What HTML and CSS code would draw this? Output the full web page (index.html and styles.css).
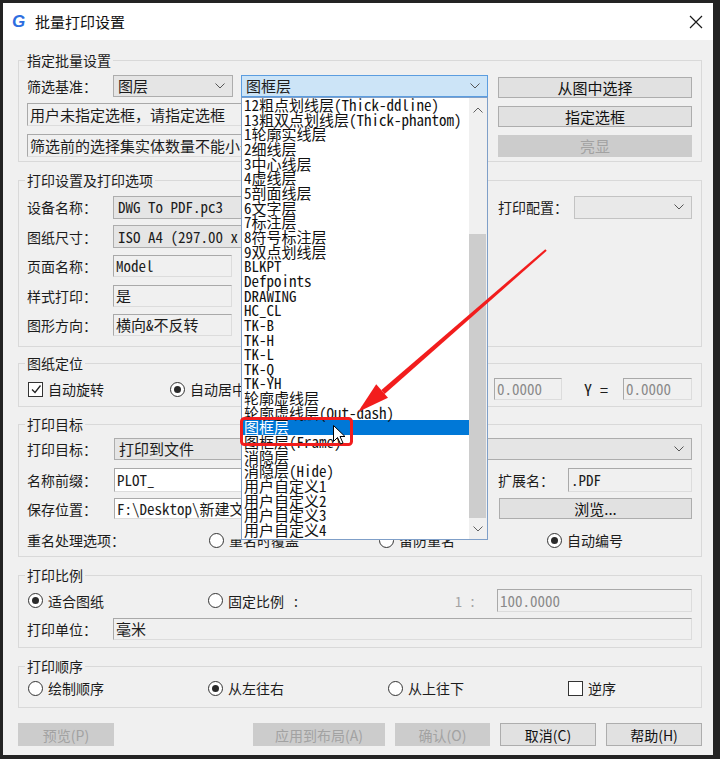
FILE: index.html
```html
<!DOCTYPE html>
<html lang="zh-CN">
<head>
<meta charset="utf-8">
<title>批量打印设置</title>
<link rel="stylesheet" href="styles.css">
</head>
<body>
<div class="win">
  <header class="titlebar">
    <span class="logo">G</span>
    <span class="title">批量打印设置</span>
    <svg class="close" width="14" height="14" viewBox="0 0 14 14"><path d="M1 1L13 13M13 1L1 13" stroke="#1a1a1a" stroke-width="1.2"/></svg>
  </header>
  <main class="content">
    <fieldset class="grp g1">
      <legend>指定批量设置</legend>
      <div class="g1-body">
        <div class="g1-left">
          <div class="row h22">
            <span class="lbl w86">筛选基准：</span>
            <div class="combo w120 mr8"><span>图层</span><svg class="chev" width="10" height="6" viewBox="0 0 10 6"><path d="M0.5 0.5L5 5L9.5 0.5" fill="none" stroke="#555"/></svg></div>
            <div class="combo-wrap">
              <div class="combo focus"><span>图框层</span><svg class="chev" width="10" height="6" viewBox="0 0 10 6"><path d="M0.5 0.5L5 5L9.5 0.5" fill="none" stroke="#555"/></svg></div>
              <div class="dropdown">
                <div class="dd-list">
                  <div class="dd-item">12粗点划线层(Thick-ddline)</div>
                  <div class="dd-item">13粗双点划线层(Thick-phantom)</div>
                  <div class="dd-item">1轮廓实线层</div>
                  <div class="dd-item">2细线层</div>
                  <div class="dd-item">3中心线层</div>
                  <div class="dd-item">4虚线层</div>
                  <div class="dd-item">5剖面线层</div>
                  <div class="dd-item">6文字层</div>
                  <div class="dd-item">7标注层</div>
                  <div class="dd-item">8符号标注层</div>
                  <div class="dd-item">9双点划线层</div>
                  <div class="dd-item">BLKPT</div>
                  <div class="dd-item">Defpoints</div>
                  <div class="dd-item">DRAWING</div>
                  <div class="dd-item">HC_CL</div>
                  <div class="dd-item">TK-B</div>
                  <div class="dd-item">TK-H</div>
                  <div class="dd-item">TK-L</div>
                  <div class="dd-item">TK-Q</div>
                  <div class="dd-item">TK-YH</div>
                  <div class="dd-item">轮廓虚线层</div>
                  <div class="dd-item">轮廓虚线层(Out-dash)</div>
                  <div class="dd-item sel">图框层</div>
                  <div class="dd-item">图框层(Frame)</div>
                  <div class="dd-item">消隐层</div>
                  <div class="dd-item">消隐层(Hide)</div>
                  <div class="dd-item">用户自定义1</div>
                  <div class="dd-item">用户自定义2</div>
                  <div class="dd-item">用户自定义3</div>
                  <div class="dd-item">用户自定义4</div>
                </div>
                <div class="dd-scroll">
                  <div class="dd-up"><svg width="10" height="6" viewBox="0 0 10 6"><path d="M0.5 5.5L5 1L9.5 5.5" fill="none" stroke="#606060"/></svg></div>
                  <div class="dd-track"></div>
                  <div class="dd-thumb"></div>
                  <div class="dd-down"><svg width="10" height="6" viewBox="0 0 10 6"><path d="M0.5 0.5L5 5L9.5 0.5" fill="none" stroke="#606060"/></svg></div>
                </div>
              </div>
            </div>
          </div>
          <div class="edit note mt6">用户未指定选框，请指定选框</div>
          <div class="edit note mt8">筛选前的选择集实体数量不能小于1</div>
        </div>
        <div class="g1-right">
          <button class="btn h21">从图中选择</button>
          <button class="btn h21">指定选框</button>
          <button class="btn h22 dis">亮显</button>
        </div>
      </div>
    </fieldset>

    <fieldset class="grp g2">
      <legend>打印设置及打印选项</legend>
      <div class="rows g2-rows">
        <div class="row h24">
          <span class="lbl w86">设备名称：</span>
          <div class="combo w375 mono"><span>DWG To PDF.pc3</span><svg class="chev" width="10" height="6" viewBox="0 0 10 6"><path d="M0.5 0.5L5 5L9.5 0.5" fill="none" stroke="#555"/></svg></div>
          <span class="lbl w76 ml10">打印配置：</span>
          <div class="combo w118 light"><span></span><svg class="chev" width="10" height="6" viewBox="0 0 10 6"><path d="M0.5 0.5L5 5L9.5 0.5" fill="none" stroke="#555"/></svg></div>
        </div>
        <div class="row h24">
          <span class="lbl w86">图纸尺寸：</span>
          <div class="combo w375 mono"><span>ISO A4 (297.00 x 210.00 毫米)</span><svg class="chev" width="10" height="6" viewBox="0 0 10 6"><path d="M0.5 0.5L5 5L9.5 0.5" fill="none" stroke="#555"/></svg></div>
        </div>
        <div class="row h24">
          <span class="lbl w86">页面名称：</span>
          <div class="edit w119 h22 mono">Model</div>
        </div>
        <div class="row h24">
          <span class="lbl w86">样式打印：</span>
          <div class="edit w119 h22 mono">是</div>
        </div>
        <div class="row h24">
          <span class="lbl w86">图形方向：</span>
          <div class="edit w119 h22 mono">横向&amp;不反转</div>
        </div>
      </div>
    </fieldset>

    <fieldset class="grp g3">
      <legend>图纸定位</legend>
      <div class="row h22">
        <label class="opt w142"><span class="check"><svg width="12" height="12" viewBox="0 0 12 12"><path d="M2 6.5L5 9.5L10.5 2.5" fill="none" stroke="#222" stroke-width="1.3"/></svg></span>自动旋转</label>
        <label class="opt w286"><span class="radio on"></span>自动居中</label>
        <span class="lbl w39 mono">X =</span>
        <div class="edit w68 h22 mono dim">0.0000</div>
        <span class="lbl w61 mono ylbl">Y =</span>
        <div class="edit w69 h22 mono dim">0.0000</div>
      </div>
    </fieldset>

    <fieldset class="grp g4">
      <legend>打印目标</legend>
      <div class="rows">
        <div class="row h22">
          <span class="lbl w87">打印目标：</span>
          <div class="combo w578"><span>打印到文件</span><svg class="chev" width="10" height="6" viewBox="0 0 10 6"><path d="M0.5 0.5L5 5L9.5 0.5" fill="none" stroke="#555"/></svg></div>
        </div>
        <div class="row h24 mt8">
          <span class="lbl w87">名称前缀：</span>
          <div class="edit white w374 h24 mono">PLOT_</div>
          <span class="lbl w70 ml10">扩展名：</span>
          <div class="edit w124 h24 mono">.PDF</div>
        </div>
        <div class="row h21 mt6">
          <span class="lbl w87">保存位置：</span>
          <div class="edit white w374 h21 mono">F:\Desktop\新建文件夹\</div>
          <button class="btn w193 h21 ml11">浏览...</button>
        </div>
        <div class="row h20 mt11">
          <span class="lbl w181">重名处理选项：</span>
          <label class="opt w170"><span class="radio"></span><span class="half">重名时覆盖</span></label>
          <label class="opt w168"><span class="radio"></span>留防重名</label>
          <label class="opt"><span class="radio on"></span>自动编号</label>
        </div>
      </div>
    </fieldset>

    <fieldset class="grp g5">
      <legend>打印比例</legend>
      <div class="rows">
        <div class="row h23">
          <label class="opt w180"><span class="radio on"></span>适合图纸</label>
          <label class="opt w248"><span class="radio"></span>固定比例<span class="colon">:</span></label>
          <span class="lbl w42 mono dimtxt">1 :</span>
          <div class="edit w195 h23 mono dim">100.0000</div>
        </div>
        <div class="row h22 mt6">
          <span class="lbl w86">打印单位：</span>
          <div class="edit w579 h22">毫米</div>
        </div>
      </div>
    </fieldset>

    <fieldset class="grp g6">
      <legend>打印顺序</legend>
      <div class="row h18">
        <label class="opt w180"><span class="radio"></span>绘制顺序</label>
        <label class="opt w180"><span class="radio on"></span>从左往右</label>
        <label class="opt w180"><span class="radio"></span>从上往下</label>
        <label class="opt"><span class="check"></span>逆序</label>
      </div>
    </fieldset>

    <div class="btnbar">
      <button class="btn dis w96 h23">预览(P)</button>
      <button class="btn dis w132 h23 mla">应用到布局(A)</button>
      <button class="btn dis w95 h23">确认(O)</button>
      <button class="btn w96 h23">取消(C)</button>
      <button class="btn w96 h23">帮助(H)</button>
    </div>
  </main>
</div>

<svg class="overlay" width="720" height="759" viewBox="0 0 720 759">
  <rect x="241.5" y="418.5" width="110" height="26" rx="3" fill="none" stroke="#f21d1d" stroke-width="3"/>
  <polygon points="546.7,250.8 545.3,249.2 381.4,390.1 384.6,393.9" fill="#f21d1d"/>
  <polygon points="358,412 376.2,384.2 388,397.8" fill="#f21d1d"/>
  <path transform="translate(333 425)" d="M0.5 0.5V16.5L4.5 12.5L7.5 19L10 18L7 11.5H12Z" fill="#fff" stroke="#000" stroke-width="1"/>
</svg>
</body>
</html>
```

FILE: styles.css
```css
* { box-sizing: border-box; }
html, body { margin: 0; padding: 0; }
body {
  position: relative;
  width: 720px;
  height: 759px;
  overflow: hidden;
  background: #232323;
  font-family: "Noto Sans CJK SC", "Noto Sans", sans-serif;
  font-size: 14px;
  line-height: 20px;
  color: #1c1c1c;
}
.mono { font-family: "Noto Sans Mono CJK SC", "Liberation Mono", "Noto Sans CJK SC", monospace; }

.win {
  margin: 3px 0 0 3px;
  width: 710px;
  height: 752px;
  background: #f0f0f0;
  display: flex;
  flex-direction: column;
}
.titlebar {
  flex: none;
  height: 37px;
  background: #fff;
  display: flex;
  align-items: center;
  padding: 0 10px 0 9px;
}
.logo {
  width: 14px;
  font: italic 900 17px/1 "Liberation Sans", sans-serif;
  color: #2d6ee0;
}
.title { margin-left: 9px; font-size: 15px; color: #111; }
.close { margin-left: auto; }

.content {
  display: flex;
  flex-direction: column;
  padding: 10px 11px 0 15px;
}
.grp {
  margin: 0;
  min-width: 0;
  border: 1px solid #d9d9d9;
  padding: 0 9px 0 8px;
}
.grp legend {
  padding: 0 2px;
  margin-left: -2px;
  font-size: 14px;
  line-height: 20px;
}
.g1 { padding-top: 5px; padding-bottom: 4px; }
.g2 { margin-top: 8px; padding-top: 5px; padding-bottom: 9px; }
.g3 { margin-top: 6px; padding-top: 5px; padding-bottom: 6px; }
.g4 { margin-top: 7px; padding-top: 4px; padding-bottom: 6px; }
.g5 { margin-top: 8px; padding-top: 4px; padding-bottom: 7px; }
.g6 { margin-top: 8px; padding-top: 3px; padding-bottom: 10px; }

.row { display: flex; align-items: center; }
.rows { display: flex; flex-direction: column; }
.g2-rows { gap: 5.5px; }

/* buttons (before utility classes so margins below win) */
.btn {
  flex: none;
  appearance: none;
  padding: 0;
  font-family: inherit;
  font-size: 15px;
  line-height: 18px;
  color: #111;
  background: #e1e1e1;
  border: 1px solid #adadad;
}
.g1-right .btn { width: 194px; }
.btn.dis { background: #cccccc; border-color: #cccccc; color: #a2a2a2; }
.btnbar { margin-top: 15px; display: flex; gap: 10px; }
.btnbar .btn { font-size: 14px; }

.h18 { height: 18px; } .h20 { height: 20px; } .h21 { height: 21px; }
.h22 { height: 22px; } .h23 { height: 23px; } .h24 { height: 24px; }
.mt6 { margin-top: 6px; } .mt8 { margin-top: 8px; } .mt11 { margin-top: 11px; }
.ml10 { margin-left: 10px; } .ml11 { margin-left: 11px; } .mr8 { margin-right: 8px; }
.mla { margin-left: auto; }
.w39 { width: 39px; } .w42 { width: 42px; } .w61 { width: 61px; } .w68 { width: 68px; }
.w69 { width: 69px; } .w70 { width: 70px; } .w76 { width: 76px; } .w86 { width: 86px; }
.w87 { width: 87px; } .w95 { width: 95px; } .w96 { width: 96px; } .w118 { width: 118px; }
.w119 { width: 119px; } .w120 { width: 120px; } .w124 { width: 124px; } .w132 { width: 132px; }
.w142 { width: 142px; } .w168 { width: 168px; } .w170 { width: 170px; } .w180 { width: 180px; }
.w181 { width: 181px; } .w193 { width: 193px; } .w195 { width: 195px; } .w248 { width: 248px; }
.w286 { width: 286px; } .w374 { width: 374px; } .w375 { width: 375px; } .w578 { width: 578px; }
.w579 { width: 579px; }

.lbl { flex: none; white-space: nowrap; }

/* group 1 */
.g1-body { display: flex; gap: 10px; }
.g1-left { width: 461px; display: flex; flex-direction: column; }
.g1-right { width: 194px; padding-top: 2px; display: flex; flex-direction: column; gap: 8px; }

/* combo boxes */
.combo {
  flex: none;
  height: 22px;
  display: flex;
  align-items: center;
  background: #e5e5e5;
  border: 1px solid #adadad;
  padding: 0 7px 0 4px;
  white-space: nowrap;
  overflow: hidden;
  font-size: 15px;
}
.row.h24 > .combo { height: 23px; }
.combo > span { flex: 1; overflow: hidden; }
.combo .chev { flex: none; margin-left: 6px; }
.combo.light { background: #e9e9e9; border-color: #c3c3c3; }
.combo.focus { width: 247px; background: #cce4f7; border-color: #5b9de0; }
.combo-wrap { position: relative; width: 247px; flex: none; }

/* dropdown popup */
.dropdown {
  position: absolute;
  top: 100%;
  left: 0;
  z-index: 20;
  width: 247px;
  height: 443px;
  background: #fff;
  border: 1px solid #7f9fc8;
  display: flex;
}
.dd-list {
  width: 227px;
  font-family: "Noto Sans Mono CJK SC", "Liberation Mono", "Noto Sans CJK SC", monospace;
  font-size: 15px;
  line-height: 14.66px;
  color: #111;
}
.dd-item { height: 14.66px; padding-left: 2px; white-space: nowrap; }
.dd-item.sel { background: #0078d7; color: #fff; margin-left: 1px; padding-left: 1px; }
.dd-scroll { width: 18px; background: #f0f0f0; display: flex; flex-direction: column; }
.dd-up { height: 22px; display: flex; align-items: center; justify-content: center; padding-top: 2px; }
.dd-track { height: 114px; }
.dd-thumb { height: 284px; background: #cdcdcd; margin-right: 1px; }
.dd-down { flex: 1; display: flex; align-items: center; justify-content: center; }

/* edits */
.edit {
  flex: none;
  display: flex;
  align-items: center;
  padding-left: 2px;
  background: #f0f0f0;
  border: 1px solid;
  border-color: #a9a9a9 #dcdcdc #dcdcdc #a9a9a9;
  white-space: nowrap;
  overflow: hidden;
  font-size: 15px;
}
.edit.white { background: #fff; }
.edit.note { height: 23px; width: 461px; }
.edit.dim { color: #8a8a8a; }
.dimtxt { color: #a3a3a3; }

/* radio / check */
.opt { flex: none; display: flex; align-items: center; white-space: nowrap; }
.radio {
  flex: none;
  width: 15px;
  height: 15px;
  margin: 0 5px 0 1px;
  border: 1px solid #333;
  border-radius: 50%;
  background: #fff;
  display: flex;
  align-items: center;
  justify-content: center;
}
.radio.on::after { content: ""; width: 7px; height: 7px; border-radius: 50%; background: #2a2a2a; }
.check {
  flex: none;
  width: 15px;
  height: 15px;
  margin: 0 5px 0 1px;
  border: 1px solid #333;
  background: #fff;
  display: flex;
  align-items: center;
  justify-content: center;
}
.colon { margin-left: 10px; }
.ylbl { padding-left: 22px; font-size: 16px; }
.half { clip-path: inset(48% 0 0 0); }

.overlay { position: absolute; left: 0; top: 0; z-index: 30; pointer-events: none; }
```
